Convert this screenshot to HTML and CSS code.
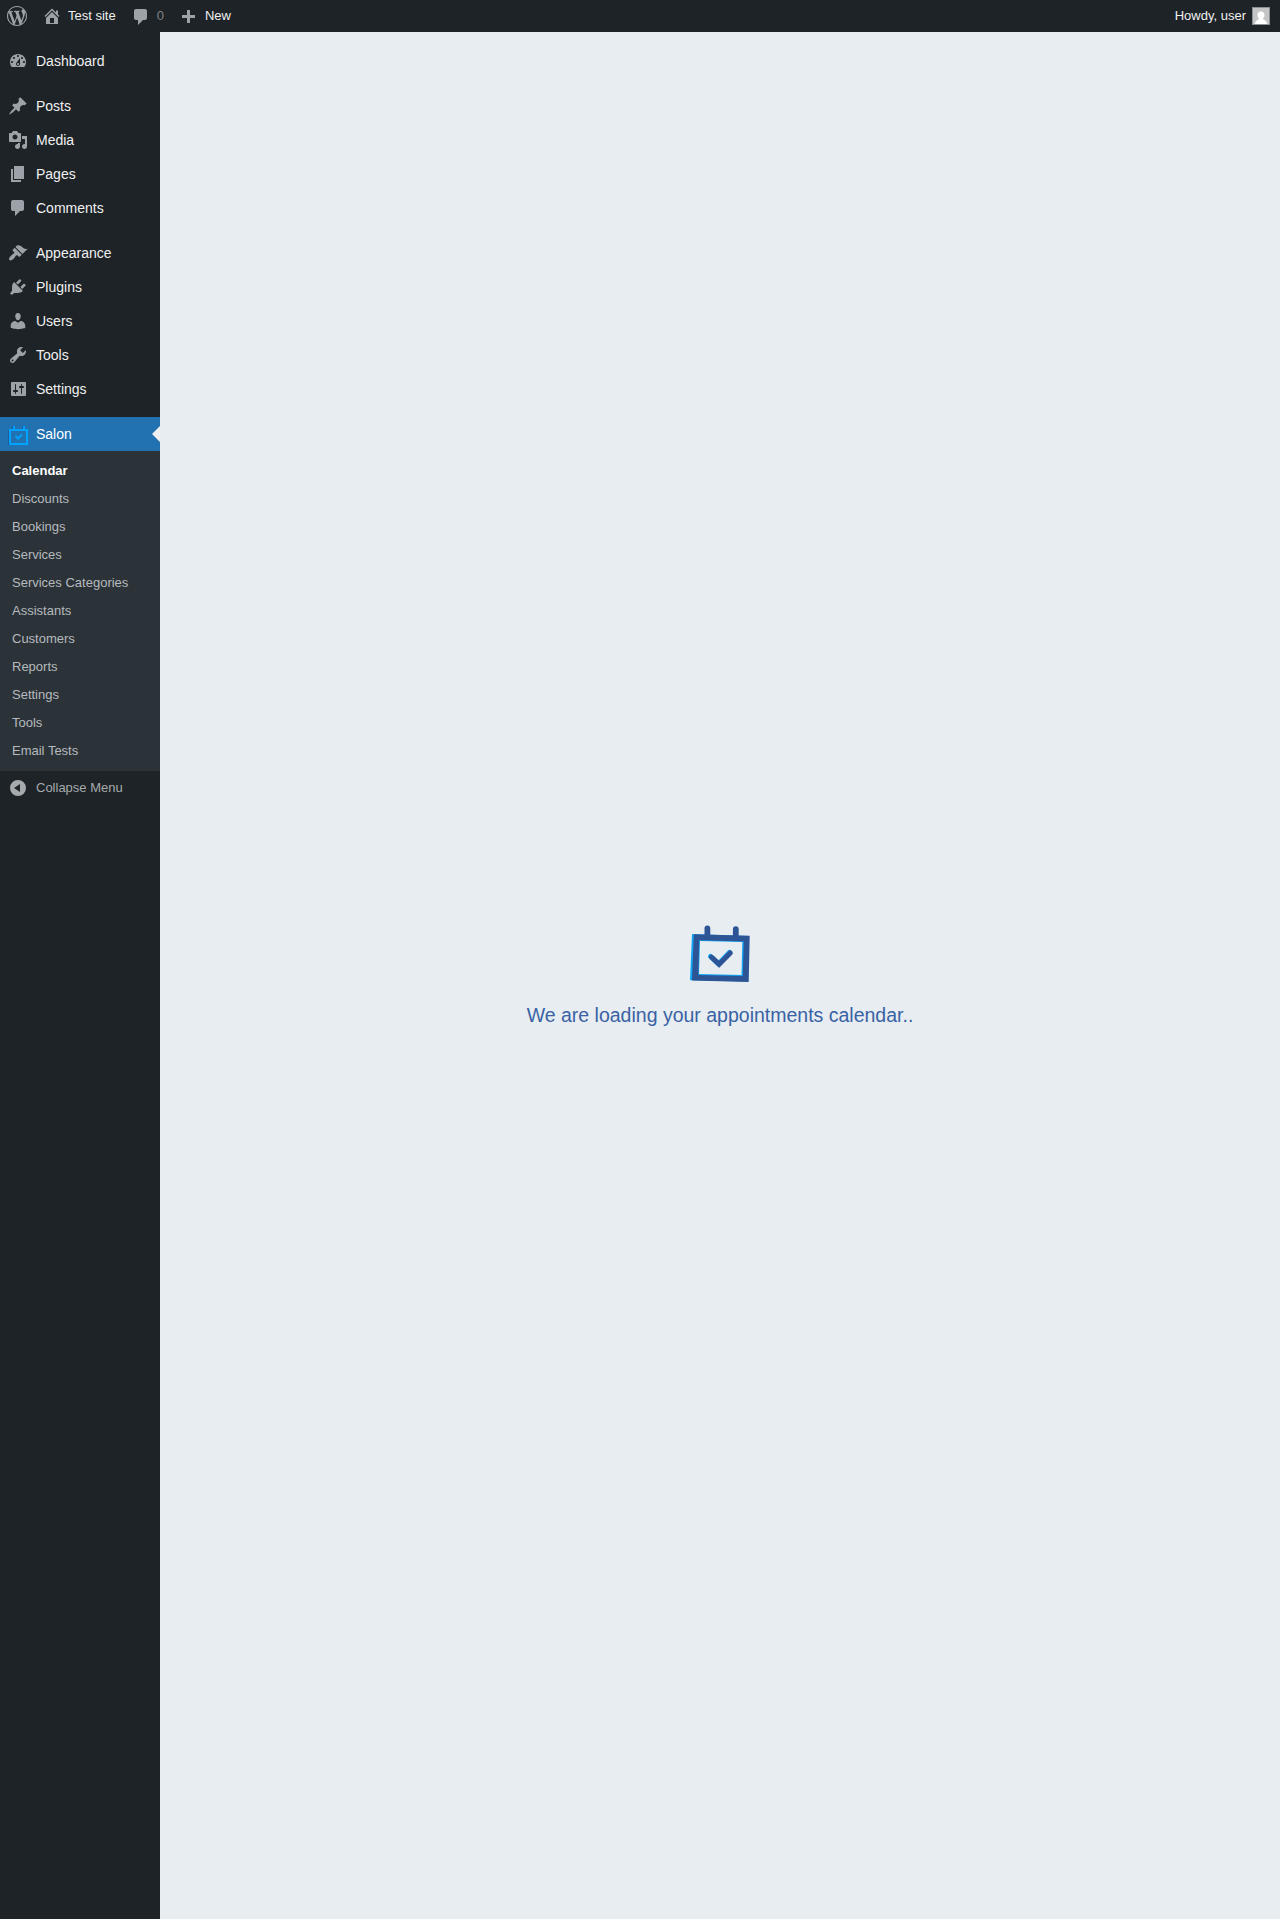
FILE: index.html
```html
<!DOCTYPE html>
<html lang="en">
<head>
<meta charset="utf-8">
<meta name="viewport" content="width=device-width, initial-scale=1">
<title>Calendar</title>
<link rel="stylesheet" href="styles.css">
</head>
<body>
<header class="adminbar">
  <a class="bar-item bar-logo" href="#" aria-label="About WordPress"><svg class="icon" viewBox="0 0 20 20"><path d="M20 10c0-5.51-4.49-10-10-10C4.48 0 0 4.49 0 10c0 5.52 4.48 10 10 10 5.51 0 10-4.48 10-10zM7.78 15.37L4.37 6.22c.55-.02 1.17-.08 1.17-.08.5-.06.44-1.13-.06-1.11 0 0-1.45.11-2.37.11-.18 0-.37 0-.58-.01C4.12 2.69 6.87 1.11 10 1.11c2.33 0 4.45.87 6.05 2.34-.68-.11-1.65.39-1.65 1.58 0 .74.45 1.36.9 2.1.35.61.55 1.36.55 2.46 0 1.49-1.4 5-1.4 5l-3.03-8.37c.54-.02.82-.17.82-.17.5-.05.44-1.25-.06-1.22 0 0-1.44.12-2.38.12-.87 0-2.33-.12-2.33-.12-.5-.03-.56 1.2-.06 1.22l.92.08 1.26 3.41zM17.41 10c.24-.64.74-1.87.43-4.25.7 1.29 1.05 2.71 1.05 4.25 0 3.29-1.73 6.24-4.4 7.78.97-2.59 1.94-5.2 2.92-7.78zM6.1 18.09C3.12 16.65 1.11 13.53 1.11 10c0-1.3.23-2.48.72-3.59C3.25 10.3 4.67 14.2 6.1 18.09zm4.03-6.63l2.58 6.98c-.86.29-1.76.45-2.71.45-.79 0-1.57-.11-2.29-.33.81-2.38 1.62-4.74 2.42-7.1z"/></svg></a>
  <a class="bar-item bar-site" href="#"><svg class="icon" viewBox="0 0 20 20"><path d="M16 8.5l1.53 1.53-1.06 1.06L10 4.6l-6.47 6.49-1.06-1.06L10 2.5l4 4v-2h2v4zm-6-2.46l6 5.99V18H4v-5.97zM12 17v-5H8v5h4z"/></svg><span class="label">Test site</span></a>
  <a class="bar-item bar-muted" href="#"><svg class="icon" viewBox="0 0 20 20"><path d="M5 3h9c1.1 0 2 .9 2 2v7c0 1.1-.9 2-2 2h-2l-5 5v-5H5c-1.1 0-2-.9-2-2V5c0-1.100.9-2 2-2z"/></svg><span class="label">0</span></a>
  <a class="bar-item" href="#"><svg class="icon" viewBox="0 0 20 20"><path d="M16 9v3h-5v5H8v-5H3V9h5V4h3v5h5z"/></svg><span class="label">New</span></a>
  <a class="bar-item bar-user" href="#"><span class="label">Howdy, user</span>
    <svg class="avatar" viewBox="0 0 16 16"><path class="avatar-bg" d="M0 0h16v16H0z"/><path class="avatar-fg" d="M8 3.500c2.300 0 3.500 1.500 3.500 3.600 0 1.600-.7 3-1.600 3.700.3 1.100 3.700 1.300 4.300 5.200H1.800C2.400 12.100 5.800 11.900 6.100 10.800c-.9-.7-1.600-2.100-1.600-3.700C4.500 5 5.700 3.500 8 3.500z"/></svg>
  </a>
</header>
<div class="layout">
  <nav class="sidebar" aria-label="Main menu">
    <ul class="menu-group">
      <li><a class="menu-link" href="#"><svg class="icon" viewBox="0 0 20 20"><path d="M3.760 16h12.480c1.100-1.370 1.760-3.110 1.760-5 0-4.420-3.580-8-8-8s-8 3.580-8 8c0 1.890.66 3.630 1.760 5zM10 4c.55 0 1 .45 1 1s-.45 1-1 1-1-.45-1-1 .45-1 1-1zM6 6c.55 0 1 .45 1 1s-.45 1-1 1-1-.45-1-1 .45-1 1-1zm8 0c.55 0 1 .45 1 1s-.45 1-1 1-1-.45-1-1 .45-1 1-1zm-5.370 5.550L12 7v6c0 1.100-.9 2-2 2s-2-.9-2-2c0-.57.24-1.080.63-1.450zM4 10c.55 0 1 .45 1 1s-.45 1-1 1-1-.45-1-1 .45-1 1-1zm12 0c.55 0 1 .45 1 1s-.45 1-1 1-1-.45-1-1 .45-1 1-1zm-5 3c0-.55-.45-1-1-1s-1 .45-1 1 .45 1 1 1 1-.45 1-1z"/></svg>Dashboard</a></li>
    </ul>
    <ul class="menu-group">
      <li><a class="menu-link" href="#"><svg class="icon" viewBox="0 0 20 20"><path d="M10.440 3.020l1.820-1.820 6.360 6.350-1.830 1.820c-1.050-.68-2.480-.57-3.410.36l-.75.75c-.92.93-1.040 2.350-.35 3.410l-1.830 1.820-2.410-2.410-2.800 2.790c-.42.42-3.380 2.710-3.800 2.290s1.860-3.390 2.280-3.810l2.790-2.790L4.100 9.360l1.830-1.820c1.050.69 2.480.57 3.400-.36l.75-.75c.93-.92 1.050-2.350.36-3.410z"/></svg>Posts</a></li>
      <li><a class="menu-link" href="#"><svg class="icon" viewBox="0 0 20 20"><path d="M13 11V4c0-.55-.45-1-1-1h-1.670L9 1H5L3.670 3H2c-.55 0-1 .45-1 1v7c0 .55.45 1 1 1h10c.55 0 1-.45 1-1zM7 4.500c1.380 0 2.500 1.120 2.500 2.500S8.380 9.500 7 9.500 4.500 8.380 4.500 7 5.620 4.500 7 4.500zM14 6h5v10.500c0 1.380-1.120 2.500-2.500 2.500S14 17.880 14 16.500s1.120-2.500 2.500-2.500c.17 0 .34.02.5.05V9h-3V6zm-4 8.050V13h2v3.500c0 1.380-1.120 2.500-2.500 2.500S7 17.880 7 16.500 8.120 14 9.500 14c.17 0 .34.02.5.05z"/></svg>Media</a></li>
      <li><a class="menu-link" href="#"><svg class="icon" viewBox="0 0 20 20"><path d="M6 15V2h10v13H6zm-1 1h8v2H3V5h2v11z"/></svg>Pages</a></li>
      <li><a class="menu-link" href="#"><svg class="icon" viewBox="0 0 20 20"><path d="M5 2h9c1.100 0 2 .9 2 2v7c0 1.100-.9 2-2 2h-2l-5 5v-5H5c-1.100 0-2-.9-2-2V4c0-1.100.9-2 2-2z"/></svg>Comments</a></li>
    </ul>
    <ul class="menu-group">
      <li><a class="menu-link" href="#"><svg class="icon" viewBox="0 0 20 20"><path d="M14.480 11.060L7.410 3.990l1.500-1.500c.5-.56 2.300-.47 3.510.32 1.210.8 1.430 1.280 2.910 2.100 1.180.64 2.450 1.260 4.450.85zm-.71.71L6.700 4.700 4.930 6.470c-.39.39-.39 1.020 0 1.410l1.060 1.060c.39.39.39 1.030 0 1.420-.6.6-1.430 1.110-2.210 1.690-.35.26-.7.53-1.010.84C1.430 14.230.4 16.080 1.400 17.070c.99 1 2.840-.03 4.180-1.360.31-.31.58-.66.85-1.020.57-.78 1.080-1.610 1.690-2.210.39-.39 1.020-.39 1.410 0l1.060 1.060c.39.39 1.020.39 1.410 0z"/></svg>Appearance</a></li>
      <li><a class="menu-link" href="#"><svg class="icon" viewBox="0 0 20 20"><path d="M13.110 4.360L9.870 7.600 8 5.730l3.240-3.240c.35-.34 1.050-.2 1.560.32.52.51.66 1.210.31 1.550zm-8 1.770l.91-1.120 9.010 9.010-1.190.84c-.71.71-2.630 1.160-3.820 1.160H6.140L4.900 17.260c-.59.59-1.540.59-2.120 0-.59-.58-.59-1.530 0-2.120l1.240-1.240v-3.880c0-1.130.4-3.190 1.090-3.890zm7.260 3.970l3.240-3.240c.34-.35 1.040-.21 1.550.31.52.51.66 1.210.31 1.550l-3.240 3.250z"/></svg>Plugins</a></li>
      <li><a class="menu-link" href="#"><svg class="icon" viewBox="0 0 20 20"><path d="M10 9.250c-2.270 0-2.730-3.440-2.730-3.440C7 4.020 7.820 2 9.970 2c2.160 0 2.980 2.020 2.710 3.810 0 0-.41 3.440-2.680 3.440zm0 2.570L12.720 10c2.390 0 4.520 2.330 4.520 4.530v2.490s-3.650 1.130-7.240 1.130c-3.650 0-7.240-1.130-7.240-1.130v-2.490c0-2.250 1.940-4.480 4.470-4.480z"/></svg>Users</a></li>
      <li><a class="menu-link" href="#"><svg class="icon" viewBox="0 0 20 20"><path d="M16.680 9.770c-1.340 1.340-3.300 1.670-4.950.99l-5.410 6.520c-.99.99-2.590.99-3.580 0s-.99-2.590 0-3.570l6.520-5.420c-.68-1.650-.35-3.610.99-4.950 1.280-1.280 3.120-1.620 4.720-1.060l-2.890 2.890 2.820 2.820 2.860-2.870c.53 1.580.18 3.390-1.080 4.650zM3.810 16.210c.4.39 1.040.39 1.430 0 .4-.4.4-1.040 0-1.430-.39-.4-1.030-.4-1.430 0-.39.39-.39 1.030 0 1.430z"/></svg>Tools</a></li>
      <li><a class="menu-link" href="#"><svg class="icon" viewBox="0 0 20 20"><path d="M18 16V4c0-.55-.45-1-1-1H4c-.55 0-1 .45-1 1v12c0 .55.45 1 1 1h13c.55 0 1-.45 1-1zM8 11h1c.55 0 1 .45 1 1s-.45 1-1 1H8v1.500c0 .28-.22.5-.5.5s-.5-.22-.5-.5V13H6c-.55 0-1-.45-1-1s.45-1 1-1h1V5.500c0-.28.22-.5.5-.5s.5.22.5.5V11zm5-2h-1c-.55 0-1-.45-1-1s.45-1 1-1h1V5.500c0-.28.22-.5.5-.5s.5.22.5.5V7h1c.55 0 1 .45 1 1s-.45 1-1 1h-1v5.500c0 .28-.22.5-.5.5s-.5-.22-.5-.5V9z"/></svg>Settings</a></li>
    </ul>
    <ul class="menu-group">
      <li>
        <a class="menu-link menu-current" href="#"><svg class="icon salon-icon" viewBox="0 0 20 20"><path class="salon-shade" d="M1 6v14h17M5 2v3M15 2v3"/><path class="salon-line" d="M2 6h17v14H2zM6 2v3M16 2v3"/><path class="salon-line" d="M7.500 12l2.500 2.500 4-4"/></svg>Salon</a>
        <ul class="submenu">
          <li><a class="sub-link sub-current" href="#" aria-current="page">Calendar</a></li>
          <li><a class="sub-link" href="#">Discounts</a></li>
          <li><a class="sub-link" href="#">Bookings</a></li>
          <li><a class="sub-link" href="#">Services</a></li>
          <li><a class="sub-link" href="#">Services Categories</a></li>
          <li><a class="sub-link" href="#">Assistants</a></li>
          <li><a class="sub-link" href="#">Customers</a></li>
          <li><a class="sub-link" href="#">Reports</a></li>
          <li><a class="sub-link" href="#">Settings</a></li>
          <li><a class="sub-link" href="#">Tools</a></li>
          <li><a class="sub-link" href="#">Email Tests</a></li>
        </ul>
      </li>
    </ul>
    <button class="collapse" type="button"><svg class="icon" viewBox="0 0 20 20"><path fill-rule="evenodd" d="M10 2a8 8 0 1 1 0 16 8 8 0 0 1 0-16zM12 6v8l-6-4z"/></svg><span class="label">Collapse Menu</span></button>
  </nav>
  <main class="content">
    <svg class="loader-icon" viewBox="10 5 60 60" aria-hidden="true">
      <g class="loader-back">
        <path fill-rule="evenodd" d="M12 15L68 17 67 62.500 10 61.200zM20 22L62.300 23 61.500 56 19 55z"/>
        <path class="check" d="M30.500 37.500L38.500 45 49.500 33.500"/>
      </g>
      <g class="loader-front">
        <path fill-rule="evenodd" d="M13.800 15.300L69.700 16.800 68.700 63 12 61.500zM19.200 21.200L63.700 22.500 62.800 57 18.400 56z"/>
        <path d="M24.500 17V9.400a2.900 2.900 0 0 1 5.800 0V17zM52.900 18V10.200a2.900 2.900 0 0 1 5.800 0v7.800z"/>
        <path class="check" d="M31.500 38.200L39.200 45.200 50.300 34"/>
      </g>
    </svg>
    <p class="loader-text" role="status">We are loading your appointments calendar..</p>
  </main>
</div>
</body>
</html>
```
FILE: styles.css
```css
* {
  box-sizing: border-box;
}

body {
  margin: 0;
  min-height: 100vh;
  display: flex;
  flex-direction: column;
  background: #e7edf1;
  font-family: "Liberation Sans", Arial, sans-serif;
  font-size: 13px;
}

ul {
  margin: 0;
  padding: 0;
  list-style: none;
}

a {
  text-decoration: none;
}

.icon {
  flex: none;
  width: 20px;
  height: 20px;
  fill: #9ca2a7;
}

.label {
  padding-bottom: 2px;
}

.adminbar {
  display: flex;
  height: 32px;
  background: #1d2327;
}

.bar-item {
  display: flex;
  align-items: center;
  gap: 6px;
  padding: 0 8px;
  color: #f0f0f1;
}

.bar-logo {
  padding: 0 7px;
}

.bar-site {
  padding-right: 7px;
}

.bar-muted {
  padding-right: 7px;
  color: #7f8488;
}

.bar-user {
  margin-left: auto;
  padding-right: 10px;
}

.avatar {
  width: 18px;
  height: 18px;
  border: 1px solid #8c8f94;
}

.avatar-bg {
  fill: #c5c5c5;
}

.avatar-fg {
  fill: #fff;
}

.layout {
  flex: 1;
  display: flex;
}

.sidebar {
  flex: none;
  width: 160px;
  padding-top: 12px;
  background: #1d2327;
}

.menu-group + .menu-group {
  margin-top: 11px;
}

.menu-link {
  position: relative;
  display: flex;
  align-items: center;
  gap: 8px;
  height: 34px;
  padding-left: 8px;
  color: #f0f0f1;
  font-size: 14px;
}

.menu-current {
  background: #2271b1;
  color: #fff;
}

.menu-current::after {
  content: "";
  position: absolute;
  right: 0;
  top: 9px;
  border: 8px solid transparent;
  border-left-width: 0;
  border-right-color: #f0f0f1;
}

.salon-icon {
  fill: none;
  stroke-width: 2;
  overflow: visible;
}

.salon-shade {
  stroke: #1e5c9c;
}

.salon-line {
  stroke: #00a2ff;
}

.submenu {
  padding: 6px 0;
  background: #2c3338;
}

.sub-link {
  display: block;
  padding-left: 12px;
  line-height: 28px;
  color: #b5babf;
}

.sub-current {
  color: #fff;
  font-weight: 700;
}

.collapse {
  display: flex;
  align-items: center;
  gap: 8px;
  width: 100%;
  height: 34px;
  padding: 0 0 0 8px;
  border: 0;
  background: none;
  color: #a7aaad;
  font: inherit;
}

.collapse .icon {
  fill: #a7aaad;
}

.content {
  flex: 1;
  display: flex;
  flex-direction: column;
  align-items: center;
  justify-content: center;
  gap: 19px;
}

.loader-icon {
  width: 60px;
  height: 60px;
}

.loader-back {
  fill: #12a5f4;
  stroke: #12a5f4;
  stroke-width: 0;
}

.loader-front {
  fill: #2d5596;
  stroke: #2d5596;
  stroke-width: 0;
}

.check {
  fill: none;
  stroke-width: 5;
  stroke-linecap: round;
}

.loader-text {
  margin: 0;
  color: #3a62a4;
  font-size: 1.5em;
  line-height: 24px;
}
```
